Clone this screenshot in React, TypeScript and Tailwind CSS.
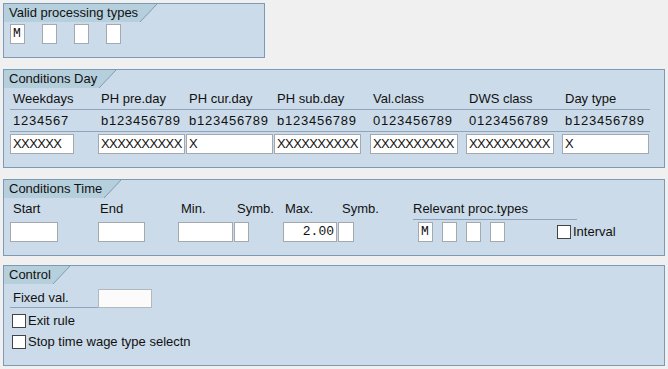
import React from 'react';

const Tab = ({ title }: { title: string }) => (
  <div className="flex h-[18px]">
    <div className="bg-[#b6cfdc] pl-[5px] pr-[2px] leading-[18px] text-[13px] whitespace-nowrap">{title}</div>
    <svg width="17" height="18" className="block">
      <polygon points="0,0 17,0 0,18" fill="#b6cfdc" />
      <line x1="0" y1="18" x2="17" y2="0" stroke="#7f9ab3" strokeWidth="1" />
    </svg>
  </div>
);

const Panel = ({ title, className, children }: { title: string; className: string; children: React.ReactNode }) => (
  <div className={`border border-[#7d9ab5] bg-[#cbdbe9] ${className}`}>
    <Tab title={title} />
    {children}
  </div>
);

const Field = ({ className, value = '', mono = false }: { className: string; value?: string; mono?: boolean }) => (
  <div
    className={`h-[20px] border border-[#a3a9ae] bg-white leading-[18px] overflow-hidden whitespace-nowrap ${
      mono ? "font-['Liberation_Mono',monospace] text-[13px]" : 'text-[13px] tracking-[-0.6px]'
    } ${className}`}
  >
    {value}
  </div>
);

const CheckBox = () => <div className="w-[14px] h-[14px] border border-[#444] bg-white" />;

const dayCols = [
  { label: 'Weekdays', digits: '1234567', value: 'XXXXXX', w: 'w-[88px]', iw: 'w-[64px]' },
  { label: 'PH pre.day', digits: 'b123456789', value: 'XXXXXXXXXX', w: 'w-[88px]', iw: 'w-[87px]' },
  { label: 'PH cur.day', digits: 'b123456789', value: 'X', w: 'w-[88px]', iw: 'w-[87px]' },
  { label: 'PH sub.day', digits: 'b123456789', value: 'XXXXXXXXXX', w: 'w-[96px]', iw: 'w-[87px]' },
  { label: 'Val.class', digits: '0123456789', value: 'XXXXXXXXXX', w: 'w-[96px]', iw: 'w-[88px]' },
  { label: 'DWS class', digits: '0123456789', value: 'XXXXXXXXXX', w: 'w-[96px]', iw: 'w-[88px]' },
  { label: 'Day type', digits: 'b123456789', value: 'X', w: 'w-[88px]', iw: 'w-[87px]' },
];

export default function App() {
  return (
    <div className="w-[668px] h-[369px] bg-[#f0f0f0] p-[3px] flex flex-col font-['Liberation_Sans',Arial,sans-serif] text-[13px] text-[#111]">
      <Panel title="Valid processing types" className="w-[262px] h-[55px]">
        <div className="flex gap-[17px] pl-[6px] mt-[2px]">
          <Field className="w-[15px] pl-[2px]" value="M" mono />
          <Field className="w-[15px]" />
          <Field className="w-[15px]" />
          <Field className="w-[15px]" />
        </div>
      </Panel>

      <Panel title="Conditions Day" className="w-[662px] h-[99px] mt-[11px]">
        <div className="pl-[6px]">
          <div className="flex w-[640px] h-[22px] border-b border-[#8ea4ba] items-center">
            {dayCols.map((c) => (
              <div key={c.label} className={`${c.w} pl-[3px] whitespace-nowrap`}>{c.label}</div>
            ))}
          </div>
          <div className="flex w-[640px] h-[22px] border-b border-[#8ea4ba] items-center">
            {dayCols.map((c) => (
              <div key={c.label} className={`${c.w} pl-[3px] tracking-[0.75px] whitespace-nowrap`}>{c.digits}</div>
            ))}
          </div>
          <div className="flex mt-[2px]">
            {dayCols.map((c) => (
              <div key={c.label} className={c.w}>
                <Field className={`${c.iw} pl-[2px]`} value={c.value} />
              </div>
            ))}
          </div>
        </div>
      </Panel>

      <Panel title="Conditions Time" className="w-[662px] h-[78px] mt-[11px]">
        <div className="pl-[6px]">
          <div className="flex h-[22px] items-center">
            <div className="w-[88px] pl-[3px]">Start</div>
            <div className="w-[80px] pl-[2px]">End</div>
            <div className="w-[56px] pl-[3px]">Min.</div>
            <div className="w-[48px] pl-[3px]">Symb.</div>
            <div className="w-[56px] pl-[3px]">Max.</div>
            <div className="w-[75px] pl-[4px]">Symb.</div>
            <div className="w-[164px] h-[22px] leading-[22px] border-b border-[#8ea4ba]">Relevant proc.types</div>
          </div>
          <div className="flex items-center mt-[2px]">
            <Field className="w-[48px] mr-[40px]" />
            <Field className="w-[47px] mr-[33px]" />
            <Field className="w-[55px] mr-[1px]" />
            <Field className="w-[15px] mr-[34px]" />
            <Field className="w-[54px] mr-[1px] text-right pr-[2px]" value="2.00" mono />
            <Field className="w-[16px] mr-[64px]" />
            <Field className="w-[15px] mr-[9px] pl-[2px]" value="M" mono />
            <Field className="w-[15px] mr-[9px]" />
            <Field className="w-[15px] mr-[9px]" />
            <Field className="w-[15px] mr-[52px]" />
            <CheckBox />
            <span className="ml-[2px]">Interval</span>
          </div>
        </div>
      </Panel>

      <Panel title="Control" className="w-[662px] h-[101px] mt-[9px]">
        <div className="pl-[6px] mt-[4px]">
          <div className="flex items-end">
            <div className="w-[88px] h-[20px] pl-[3px] leading-[19px] border-b border-[#8ea4ba]">Fixed val.</div>
            <div className="w-[54px] h-[19px] border border-[#b3b8bc] bg-[#fbfbfb]" />
          </div>
          <div className="flex items-center h-[21px] mt-[2px] pl-[2px] gap-[2px]">
            <CheckBox />
            <span>Exit rule</span>
          </div>
          <div className="flex items-center h-[21px] pl-[2px] gap-[2px]">
            <CheckBox />
            <span>Stop time wage type selectn</span>
          </div>
        </div>
      </Panel>
    </div>
  );
}
